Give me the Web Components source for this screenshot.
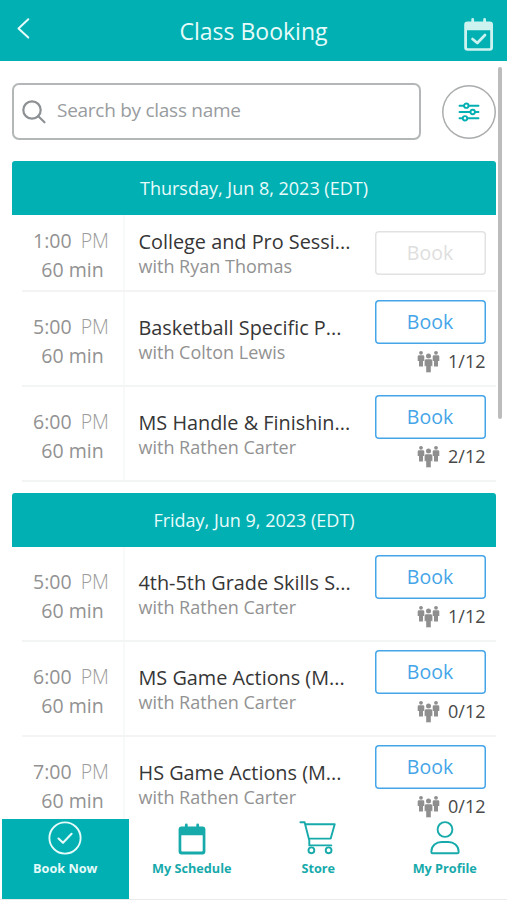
<!DOCTYPE html>
<html lang="en">
<head>
<meta charset="utf-8">
<title>Class Booking</title>
<style>
    body {
        margin: 0;
        width: 507px;
        height: 900px;
        overflow: hidden;
        background: #fff;
        font-family: "Open Sans", "Noto Sans", sans-serif;
        --teal: #00b0b2;
        --blue: #45a5e8;
        --line: #f3f5f5;
        --grey: #929292;
    }
</style>
</head>
<body>
<booking-app>
    <app-header slot="header">Class Booking</app-header>
    <search-bar>Search by class name</search-bar>
    <day-group label="Thursday, Jun 8, 2023 (EDT)">
        <class-row time="1:00" name="College and Pro Sessi..." coach="Ryan Thomas"></class-row>
        <class-row time="5:00" name="Basketball Specific P..." coach="Colton Lewis" spots="1/12"></class-row>
        <class-row time="6:00" name="MS Handle &amp; Finishin..." coach="Rathen Carter" spots="2/12"></class-row>
    </day-group>
    <day-group label="Friday, Jun 9, 2023 (EDT)">
        <class-row time="5:00" name="4th-5th Grade Skills S..." coach="Rathen Carter" spots="1/12"></class-row>
        <class-row time="6:00" name="MS Game Actions (M..." coach="Rathen Carter" spots="0/12"></class-row>
        <class-row time="7:00" name="HS Game Actions (M..." coach="Rathen Carter" spots="0/12"></class-row>
    </day-group>
    <tab-bar slot="footer">
        <tab-item icon="check" active>Book Now</tab-item>
        <tab-item icon="calendar">My Schedule</tab-item>
        <tab-item icon="cart">Store</tab-item>
        <tab-item icon="person">My Profile</tab-item>
    </tab-bar>
</booking-app>

<script>
const ICONS = {
    check: `
        <svg width="36" height="36" viewBox="0 0 36 36" fill="none" stroke="currentColor" stroke-width="1.9">
            <circle cx="18" cy="18" r="15.6"/>
            <path d="M11.5 18.500l4.500 4.300 8.600-9" stroke-width="2.100" stroke-linecap="round" stroke-linejoin="round"/>
        </svg>`,
    calendar: `
        <svg width="36" height="36" viewBox="0 0 36 36">
            <path fill="currentColor" fill-rule="evenodd" d="M7.600 6.500h20.800a3 3 0 0 1 3 3v22a3 3 0 0 1-3 3H7.600a3 3 0 0 1-3-3v-22a3 3 0 0 1 3-3zM7.300 15.300v15.500q0 .8.8.8h19.800q.8 0 .8-.8V15.300z"/>
            <path d="M12.300 5v4M23.700 5v4" stroke="currentColor" stroke-width="2.800" stroke-linecap="round"/>
        </svg>`,
    cart: `
        <svg width="38" height="36" viewBox="0 0 38 36" fill="none" stroke="currentColor" stroke-width="1.9" stroke-linecap="round" stroke-linejoin="round">
            <path d="M1.400 2.200h4.200l4.700 18.300v4.900h22M6.200 4.300h29.500l-4 14.300H9.800"/>
            <circle cx="12.400" cy="30.300" r="2.900"/>
            <circle cx="29.600" cy="30.300" r="2.900"/>
        </svg>`,
    person: `
        <svg width="36" height="36" viewBox="0 0 36 36" fill="none" stroke="currentColor" stroke-width="1.9">
            <circle cx="18" cy="9.500" r="7.400"/>
            <path d="M5.700 33.300h24.600q1.400 0 1.400-1.400C31.700 25.500 26.500 22 21.500 22h-7C9.500 22 4.300 25.500 4.300 31.900q0 1.400 1.400 1.400z"/>
        </svg>`
};

class BookingApp extends HTMLElement {
    constructor(){
        super();
        this.attachShadow({mode: "open"});
        this.shadowRoot.innerHTML = `
            <style>
                :host {
                display: flex;
                flex-direction: column;
                height: 900px;
                position: relative;}

                main {
                flex: 1;
                min-height: 0;
                overflow: hidden;
                padding: 22px 11px 0 12px;}

                .thumb {
                position: absolute;
                top: 67px;
                right: 5px;
                width: 4px;
                height: 352px;
                border-radius: 2px;
                background: #bcbcbc;}
            </style>
            <slot name="header"></slot>
            <main><slot></slot></main>
            <slot name="footer"></slot>
            <div class="thumb"></div>
        `;
    }
}

class AppHeader extends HTMLElement {
    constructor(){
        super();
        this.attachShadow({mode: "open"});
        this.shadowRoot.innerHTML = `
            <style>
                :host {
                display: grid;
                grid-template-columns: 60px 1fr 60px;
                height: 61px;
                flex: none;
                background: var(--teal);
                color: #e6fbfa;}

                .back {
                margin: 17px 0 0 16px;}

                h1 {
                margin: 0;
                font-size: 23px;
                font-weight: 400;
                line-height: 62px;
                text-align: center;
                white-space: nowrap;}

                .cal {
                margin: 17px 0 0 16px;}
            </style>
            <svg class="back" width="15" height="23" viewBox="0 0 15 23" fill="none" stroke="currentColor" stroke-width="2" stroke-linecap="round" stroke-linejoin="round">
                <path d="M12.300 2.200L2.500 11.400l9.800 9.200"/>
            </svg>
            <h1><slot></slot></h1>
            <svg class="cal" width="32" height="35" viewBox="0 0 32 35" fill="none" stroke="#cdf3f1">
                <path fill="#cdf3f1" stroke="none" fill-rule="evenodd" d="M4.500 4.500h22.200a3.300 3.300 0 0 1 3.300 3.300v22.700a3.300 3.300 0 0 1-3.300 3.300H4.500a3.300 3.300 0 0 1-3.300-3.300V7.800a3.300 3.300 0 0 1 3.300-3.300zM4 13.300v16.900q0 1 1 1h21.200q1 0 1-1V13.300z"/>
                <path d="M9.700 2.500v4M21.600 2.500v4" stroke-width="2.800" stroke-linecap="round"/>
                <path d="M9.500 22l4.800 4 7.700-8" stroke-width="2.700" stroke-linecap="round" stroke-linejoin="round"/>
            </svg>
        `;
    }
}

class SearchBar extends HTMLElement {
    constructor(){
        super();
        this.attachShadow({mode: "open"});
        this.shadowRoot.innerHTML = `
            <style>
                :host {
                display: flex;
                align-items: center;
                justify-content: space-between;
                height: 57px;
                margin-bottom: 21px;}

                .field {
                box-sizing: border-box;
                display: flex;
                align-items: center;
                gap: 10px;
                width: 409px;
                height: 57px;
                padding-left: 7px;
                border: 2px solid #b4b7b8;
                border-radius: 7px;
                color: #989c9f;
                font-size: 19px;
                font-weight: 500;
                line-height: 26px;
                letter-spacing: -0.27px;}

                .field span {
                margin-bottom: 3px;}

                .filter {
                box-sizing: border-box;
                display: grid;
                place-items: center;
                width: 54px;
                height: 54px;
                box-shadow: inset 0 0 0 1.5px #aaacad;
                border-radius: 50%;
                color: var(--teal);}
            </style>
            <div class="field">
                <svg width="26" height="26" viewBox="0 0 26 26" fill="none" stroke="#8d9194" stroke-width="2.200" stroke-linecap="round">
                    <circle cx="11" cy="11" r="8.700"/>
                    <path d="M17.300 17.300l6.200 6"/>
                </svg>
                <span><slot></slot></span>
            </div>
            <div class="filter">
                <svg width="22" height="20" viewBox="0 0 22 20" fill="#fff" stroke="currentColor" stroke-width="1.900" stroke-linecap="round">
                    <path d="M1.500 3.700h19M1.500 10h19M1.500 16.300h19"/>
                    <circle cx="8.300" cy="3.700" r="2.200"/>
                    <circle cx="14.700" cy="10" r="2.200"/>
                    <circle cx="7" cy="16.300" r="2.200"/>
                </svg>
            </div>
        `;
    }
}

class DayGroup extends HTMLElement {
    constructor(){
        super();
        this.attachShadow({mode: "open"});
    }

    connectedCallback(){
        this.shadowRoot.innerHTML = `
            <style>
                :host {
                display: block;
                margin-bottom: 11px;}

                h2 {
                margin: 0;
                height: 54px;
                border-radius: 3px 3px 0 0;
                background: var(--teal);
                color: #e9fbfb;
                font-size: 18px;
                font-weight: 400;
                line-height: 54px;
                text-align: center;}
            </style>
            <h2>${this.getAttribute("label")}</h2>
            <slot></slot>
        `;
    }
}

class ClassRow extends HTMLElement {
    constructor(){
        super();
        this.attachShadow({mode: "open"});
    }

    connectedCallback(){
        const spots = this.getAttribute("spots");
        const name = this.getAttribute("name").replace("&", "&amp;");
        this.shadowRoot.innerHTML = `
            <style>
                :host {
                box-sizing: border-box;
                display: grid;
                grid-template-columns: 103px 1fr 111px;
                height: ${spots ? 95 : 77}px;
                margin-left: 10px;
                padding-right: 10.5px;
                border-bottom: 2px solid var(--line);}

                .when {
                display: flex;
                flex-direction: column;
                justify-content: center;
                padding-top: 5px;
                border-right: 2px solid #f8f9f9;
                color: var(--grey);
                font-size: 19.5px;
                line-height: 29.5px;
                text-align: center;}

                .when div:first-child {
                margin-right: 3px;}

                .when span {
                margin-left: 9px;
                color: #9c9c9c;
                font-weight: 300;}

                .what {
                align-self: center;
                padding-left: 13.5px;
                white-space: nowrap;}

                .name {
                color: #363636;
                font-size: 19.85px;
                line-height: 27px;}

                .coach {
                color: var(--grey);
                font-size: 18px;
                line-height: 23px;}

                .action {
                padding-top: ${spots ? 8 : 16}px;}

                button {
                box-sizing: border-box;
                display: block;
                width: 111px;
                height: 44px;
                padding: 0;
                border: 0;
                box-shadow: inset 0 0 0 1.5px var(--blue);
                border-radius: 4px;
                background: none;
                color: var(--blue);
                font: 19.5px/44px "Open Sans", sans-serif;}

                button:disabled {
                box-shadow: inset 0 0 0 1.5px #e2e2e2;
                color: #dedede;}

                .spots {
                display: flex;
                justify-content: flex-end;
                gap: 8px;
                margin-top: 5px;
                color: #484848;
                font-size: 18px;
                line-height: 25px;}
            </style>
            <div class="when">
                <div>${this.getAttribute("time")}<span>PM</span></div>
                <div>60 min</div>
            </div>
            <div class="what">
                <div class="name">${name}</div>
                <div class="coach">with ${this.getAttribute("coach")}</div>
            </div>
            <div class="action">
                <button ${spots ? "" : "disabled"}>Book</button>
                ${spots ? `<div class="spots">
                    <svg width="23" height="25" viewBox="0 0 23 25" fill="#8f8f8f">
                        <circle cx="4" cy="3.800" r="1.900"/>
                        <path d="M2 6.200h4q1.300 0 1.300 1.300V12H6v5.500H2V12H.7V7.500Q.7 6.200 2 6.200z"/>
                        <circle cx="19" cy="3.800" r="1.900"/>
                        <path d="M17 6.200h4q1.300 0 1.300 1.300V12H21v5.500h-4V12h-1.300V7.500q0-1.300 1.300-1.300z"/>
                        <circle cx="11.500" cy="6.900" r="2.500"/>
                        <path d="M9 10.100h5q1.600 0 1.600 1.600v5.500H14v6.300H9v-6.300H7.400v-5.500q0-1.600 1.600-1.600z" stroke="#fff" stroke-width=".4"/>
                    </svg>
                    <span>${spots}</span>
                </div>` : ""}
            </div>
        `;
    }
}

class TabBar extends HTMLElement {
    constructor(){
        super();
        this.attachShadow({mode: "open"});
        this.shadowRoot.innerHTML = `
            <style>
                :host {
                box-sizing: border-box;
                display: grid;
                grid-template-columns: repeat(4, 126.5px);
                flex: none;
                height: 81px;
                padding-left: 2px;
                border-bottom: 1px solid #e9eaea;
                background: #fff;}
            </style>
            <slot></slot>
        `;
    }
}

class TabItem extends HTMLElement {
    constructor(){
        super();
        this.attachShadow({mode: "open"});
    }

    connectedCallback(){
        this.shadowRoot.innerHTML = `
            <style>
                :host {
                display: flex;
                flex-direction: column;
                align-items: center;
                padding-top: 1px;
                color: #17aaab;
                font-size: 12.7px;
                font-weight: 700;
                line-height: 18px;}

                :host([active]) {
                background: var(--teal);
                color: #e4fbfa;}

                span {
                margin-top: 3px;}

                svg {
                display: block;}
            </style>
            ${ICONS[this.getAttribute("icon")]}
            <span><slot></slot></span>
        `;
    }
}

customElements.define('booking-app', BookingApp);
customElements.define('app-header', AppHeader);
customElements.define('search-bar', SearchBar);
customElements.define('day-group', DayGroup);
customElements.define('class-row', ClassRow);
customElements.define('tab-bar', TabBar);
customElements.define('tab-item', TabItem);
</script>
</body>
</html>
